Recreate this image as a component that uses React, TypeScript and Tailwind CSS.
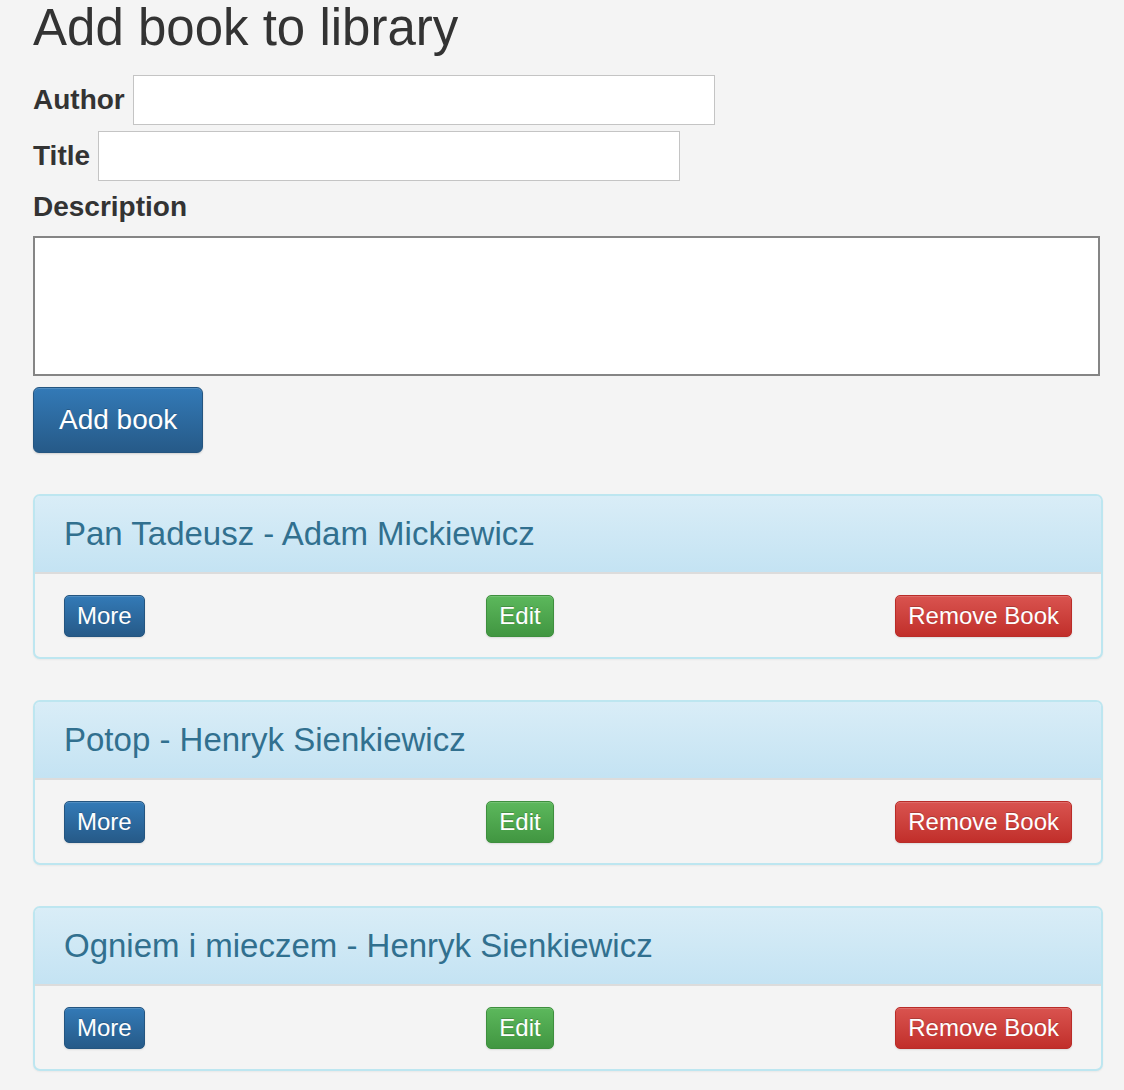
const books = [
  { title: 'Pan Tadeusz', author: 'Adam Mickiewicz' },
  { title: 'Potop', author: 'Henryk Sienkiewicz' },
  { title: 'Ogniem i mieczem', author: 'Henryk Sienkiewicz' },
];

const btnBase =
  'h-[42px] px-3 flex items-center rounded-[5px] border text-[24px] text-white [text-shadow:0_-1px_0_rgba(0,0,0,0.2)] shadow-[inset_0_1px_0_rgba(255,255,255,0.15),0_1px_2px_rgba(0,0,0,0.1)]';

export default function App() {
  return (
    <div className="min-h-screen bg-[#f4f4f4] px-[33px] pb-6 font-['Liberation_Sans',Arial,sans-serif] text-[#333]">
      <h3 className="text-[51px] leading-[1.1] font-normal">Add book to library</h3>

      <form className="mt-[19px]" onSubmit={(e) => e.preventDefault()}>
        <div className="flex items-center gap-2">
          <label className="text-[28px] font-bold">Author</label>
          <input className="w-[582px] h-[50px] bg-white border border-[#c4c4c4] outline-none" />
        </div>
        <div className="flex items-center gap-2 mt-[6px]">
          <label className="text-[28px] font-bold">Title</label>
          <input className="w-[582px] h-[50px] bg-white border border-[#c4c4c4] outline-none" />
        </div>
        <label className="block mt-[6px] text-[28px] leading-[40px] font-bold">Description</label>
        <textarea className="block mt-[9px] w-[1067px] h-[140px] bg-white border-2 border-[#858585] resize-none outline-none" />
        <button
          type="submit"
          className="mt-[11px] h-[66px] px-[25px] rounded-[6px] border border-[#245580] bg-gradient-to-b from-[#337ab7] to-[#265a88] text-white text-[28px] [text-shadow:0_-1px_0_rgba(0,0,0,0.2)] shadow-[inset_0_1px_0_rgba(255,255,255,0.15),0_1px_2px_rgba(0,0,0,0.15)]"
        >
          Add book
        </button>
      </form>

      <div className="mt-[41px] w-[1070px] flex flex-col gap-[41px]">
        {books.map((b) => (
          <div
            key={b.title}
            className="rounded-[7px] border-2 border-[#bde6f0] overflow-hidden bg-[#f4f4f4] shadow-[0_1px_2px_rgba(0,0,0,0.05)]"
          >
            <div className="h-[78px] px-[29px] flex items-center bg-gradient-to-b from-[#d9edf7] to-[#c4e3f3] border-b-2 border-[#dcdcdc]">
              <h3 className="text-[33px] text-[#31708f] leading-[1.1]">
                {b.title} - {b.author}
              </h3>
            </div>
            <div className="h-[83px] px-[29px] flex items-center justify-between">
              <button className={`${btnBase} border-[#245580] bg-gradient-to-b from-[#337ab7] to-[#265a88]`}>More</button>
              <button className={`${btnBase} border-[#3e8f3e] bg-gradient-to-b from-[#5cb85c] to-[#419641]`}>Edit</button>
              <button className={`${btnBase} border-[#b92c28] bg-gradient-to-b from-[#d9534f] to-[#c12e2a]`}>Remove Book</button>
            </div>
          </div>
        ))}
      </div>
    </div>
  );
}
